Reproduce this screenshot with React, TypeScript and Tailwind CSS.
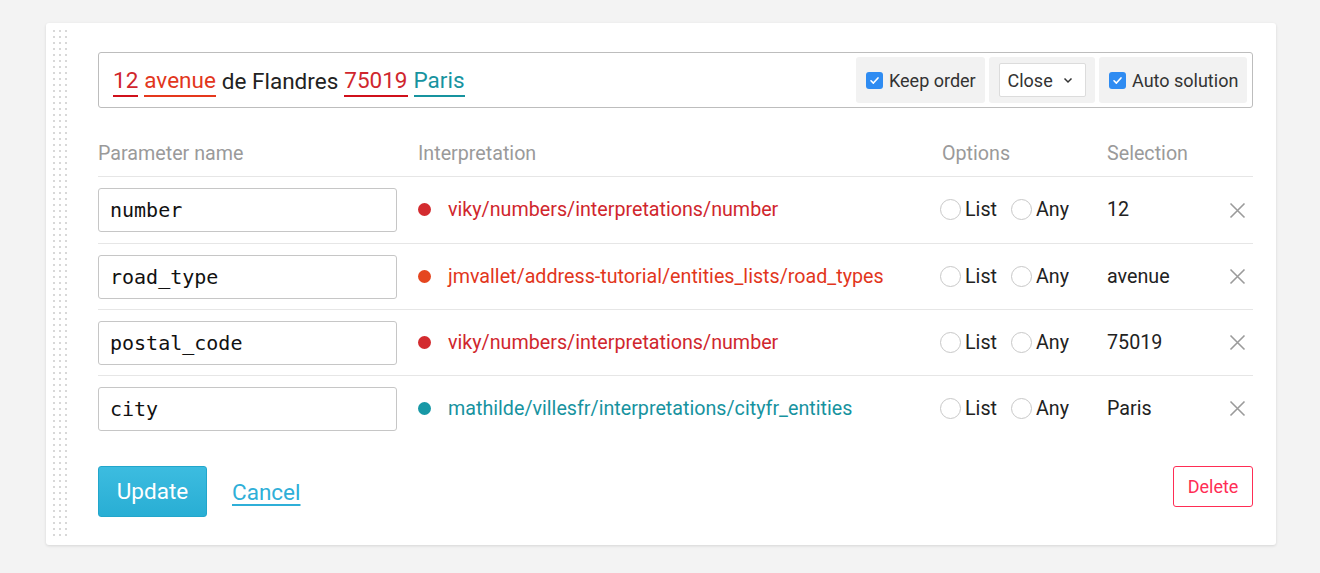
import React from "react";

const rows = [
  { name: "number", interp: "viky/numbers/interpretations/number", color: "text-[#d0262d]", dot: "bg-[#d32b2f]", sel: "12" },
  { name: "road_type", interp: "jmvallet/address-tutorial/entities_lists/road_types", color: "text-[#e2361c]", dot: "bg-[#e5461f]", sel: "avenue" },
  { name: "postal_code", interp: "viky/numbers/interpretations/number", color: "text-[#d0262d]", dot: "bg-[#d32b2f]", sel: "75019" },
  { name: "city", interp: "mathilde/villesfr/interpretations/cityfr_entities", color: "text-[#17939f]", dot: "bg-[#1798a6]", sel: "Paris" },
];

function Check() {
  return (
    <span className="flex h-[17px] w-[17px] items-center justify-center rounded-[3px] bg-[#2f8cf2]">
      <svg width="11" height="11" viewBox="0 0 12 12" fill="none">
        <path d="M2.2 6.3 L4.8 8.8 L9.8 3.2" stroke="white" strokeWidth="1.8" strokeLinecap="round" strokeLinejoin="round" />
      </svg>
    </span>
  );
}

function Radio({ label }: { label: string }) {
  return (
    <span className="flex items-center gap-[4px]">
      <span className="h-[21px] w-[21px] rounded-full border border-[#c8c8c8] bg-white" />
      <span>{label}</span>
    </span>
  );
}

export default function App() {
  const dots = Array.from({ length: 85 * 3 });
  return (
    <div className="min-h-[573px] w-[1320px] bg-[#f3f3f3] pt-[23px] font-['Roboto',sans-serif] text-[#222]">
      <div className="ml-[46px] flex h-[522px] w-[1230px] rounded-[3px] bg-white shadow-[0_1px_3px_rgba(0,0,0,0.12)]">
        <div className="w-[52px] pl-[7px] pt-[7px]">
          <div className="grid w-[14px] grid-cols-3 gap-x-[4px] gap-y-[4px]">
            {dots.map((_, i) => (
              <div key={i} className="h-[2px] w-[2px] bg-[#d8d8d8]" />
            ))}
          </div>
        </div>
        <div className="flex flex-1 flex-col pr-[23px] pt-[29px]">
          <div className="flex h-[56px] items-center rounded-[3px] border border-[#bdbdbd] pl-[14px] pr-[5px]">
            <div className="flex flex-1 items-center gap-[6px] text-[22.5px] leading-[30px]">
              <span className="border-b-2 border-[#d0101b] pt-[2px] text-[#d0262d]">12</span>
              <span className="border-b-2 border-[#e5381c] pt-[2px] text-[#e2361c]">avenue</span>
              <span className="pt-[2px] text-[#222]">de Flandres</span>
              <span className="border-b-2 border-[#d0101b] pt-[2px] text-[#d0262d]">75019</span>
              <span className="border-b-2 border-[#17939f] pt-[2px] text-[#17939f]">Paris</span>
            </div>
            <div className="flex items-center gap-[4px] text-[18px] text-[#333]">
              <div className="flex h-[46px] w-[129px] items-center gap-[6px] rounded-[3px] bg-[#f2f2f2] pl-[10px]">
                <Check />
                <span>Keep order</span>
              </div>
              <div className="flex h-[46px] w-[106px] items-center justify-center rounded-[3px] bg-[#f2f2f2]">
                <div className="flex h-[34px] w-[87px] items-center gap-[10px] rounded-[2px] border border-[#dcdcdc] bg-white pl-[8px]">
                  <span>Close</span>
                  <svg width="10" height="7" viewBox="0 0 10 7" fill="none">
                    <path d="M1.5 1.5 L5 5 L8.5 1.5" stroke="#333" strokeWidth="1.5" />
                  </svg>
                </div>
              </div>
              <div className="flex h-[46px] w-[148px] items-center gap-[6px] rounded-[3px] bg-[#f2f2f2] pl-[10px]">
                <Check />
                <span>Auto solution</span>
              </div>
            </div>
          </div>

          <div className="mt-[34px] grid grid-cols-[320px_524px_165px_1fr] border-b border-[#e6e6e6] pb-[10px] text-[19.7px] leading-[24px] text-[#9a9a9a]">
            <span>Parameter name</span>
            <span>Interpretation</span>
            <span>Options</span>
            <span>Selection</span>
          </div>

          {rows.map((r, i) => (
            <div
              key={r.name}
              className={`grid h-[66px] grid-cols-[320px_522px_167px_1fr_auto] items-center text-[19.7px] ${i > 0 ? "border-t border-[#e6e6e6]" : ""}`}
            >
              <div>
                <div className="flex h-[44px] w-[299px] items-center rounded-[3px] border border-[#c6c6c6] pl-[11px] font-['DejaVu_Sans_Mono',monospace] text-[20px] text-[#111]">
                  {r.name}
                </div>
              </div>
              <div className="flex items-center gap-[17px]">
                <span className={`h-[13px] w-[13px] rounded-full ${r.dot}`} />
                <span className={r.color}>{r.interp}</span>
              </div>
              <div className="flex items-center gap-[14px] text-[#222]">
                <Radio label="List" />
                <Radio label="Any" />
              </div>
              <span className="text-[#222]">{r.sel}</span>
              <svg className="mr-[7px]" width="17" height="17" viewBox="0 0 17 17" fill="none">
                <path d="M1.5 1.5 L15.5 15.5 M15.5 1.5 L1.5 15.5" stroke="#9b9b9b" strokeWidth="1.6" />
              </svg>
            </div>
          ))}

          <div className="mt-[25px] flex items-start">
            <button className="h-[51px] w-[109px] rounded-[3px] border border-[#22a6cb] bg-gradient-to-b from-[#3cbce0] to-[#28aed4] text-[22.5px] text-white">
              Update
            </button>
            <span className="ml-[25px] mt-[10px] text-[22.5px] text-[#2fafd8] underline underline-offset-[4px]">Cancel</span>
            <div className="flex-1" />
            <button className="h-[41px] w-[80px] rounded-[3px] border border-[#ff2d55] text-[18px] text-[#ff2d55]">
              Delete
            </button>
          </div>
        </div>
      </div>
    </div>
  );
}
